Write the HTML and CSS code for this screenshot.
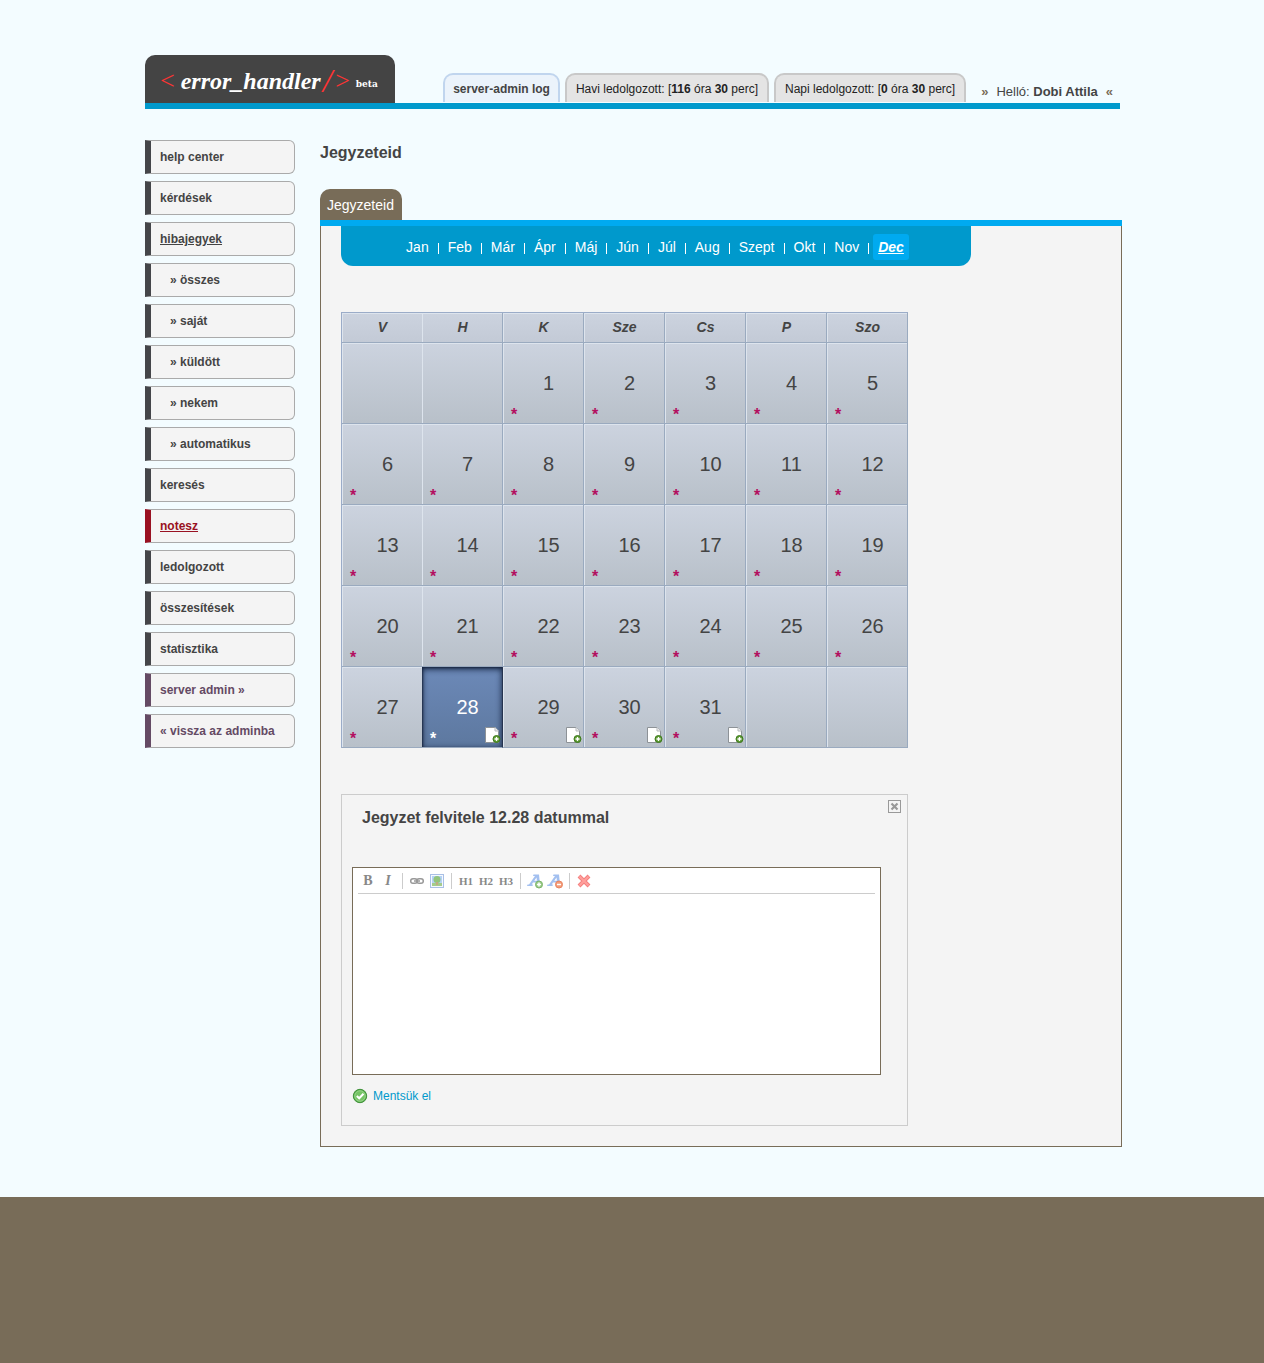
FILE: index.html
```html
<!DOCTYPE html>
<html lang="hu">
<head>
<meta charset="utf-8">
<title>error_handler</title>
<link rel="stylesheet" href="styles.css">
</head>
<body>
<svg class="sprite" aria-hidden="true">
  <symbol id="add-note" viewBox="0 0 16 16">
    <path d="M.5 .5H10L13.500 4V15.500H.5Z" fill="#fff" stroke="#8d9297"/>
    <path d="M10 .5V4H13.500" fill="#eee" stroke="#b5b9bd"/>
    <circle cx="11.500" cy="12" r="3.500" fill="#5f9b35" stroke="#3d7a1c"/>
    <path d="M11.500 10V14M9.500 12H13.500" stroke="#fff" stroke-width="1.300"/>
  </symbol>
  <symbol id="font-mark" viewBox="0 0 16 16">
    <path d="M0 13L.5 11.500H2L8 3H6L6.500 1.500H12L13 11.500H14V13H9L9.500 11.500H10.300L10 9.500H6L4.700 11.500H6L5.500 13ZM7.200 7.800H9.900L9.500 4.500Z" fill="#a3c0f0" fill-rule="evenodd"/>
  </symbol>
</svg>
<div class="page">
  <header class="header">
    <a class="logo" href="#"><span class="red">&lt;</span><span class="name">error_handler</span><span class="slash">/</span><span class="red">&gt;</span><span class="beta">beta</span></a>
    <div class="status">
      <a class="tab tab-log" href="#">server-admin log</a>
      <span class="tab">Havi ledolgozott: [<b>116</b> óra <b>30</b> perc]</span>
      <span class="tab">Napi ledolgozott: [<b>0</b> óra <b>30</b> perc]</span>
      <p class="hello"><b class="mark">»</b><span>Helló: <b>Dobi Attila</b></span><b class="mark">«</b></p>
    </div>
  </header>
  <div class="columns">
    <nav class="menu">
      <a href="#">help center</a>
      <a href="#">kérdések</a>
      <a class="open" href="#">hibajegyek</a>
      <a class="sub" href="#">» összes</a>
      <a class="sub" href="#">» saját</a>
      <a class="sub" href="#">» küldött</a>
      <a class="sub" href="#">» nekem</a>
      <a class="sub" href="#">» automatikus</a>
      <a href="#">keresés</a>
      <a class="current" href="#">notesz</a>
      <a href="#">ledolgozott</a>
      <a href="#">összesítések</a>
      <a href="#">statisztika</a>
      <a class="admin" href="#">server admin »</a>
      <a class="admin" href="#">« vissza az adminba</a>
    </nav>
    <main class="content">
      <h1>Jegyzeteid</h1>
      <a class="panel-tab" href="#">Jegyzeteid</a>
      <section class="panel">
        <ul class="months">
          <li><a href="#">Jan</a></li><li><a href="#">Feb</a></li><li><a href="#">Már</a></li><li><a href="#">Ápr</a></li><li><a href="#">Máj</a></li><li><a href="#">Jún</a></li><li><a href="#">Júl</a></li><li><a href="#">Aug</a></li><li><a href="#">Szept</a></li><li><a href="#">Okt</a></li><li><a href="#">Nov</a></li><li><a class="active" href="#">Dec</a></li>
        </ul>
        <table class="calendar">
          <thead><tr><th>V</th><th>H</th><th>K</th><th>Sze</th><th>Cs</th><th>P</th><th>Szo</th></tr></thead>
          <tbody>
            <tr><td></td><td></td><td><a href="#">1</a><div><i>*</i></div></td><td><a href="#">2</a><div><i>*</i></div></td><td><a href="#">3</a><div><i>*</i></div></td><td><a href="#">4</a><div><i>*</i></div></td><td><a href="#">5</a><div><i>*</i></div></td></tr>
            <tr><td><a href="#">6</a><div><i>*</i></div></td><td><a href="#">7</a><div><i>*</i></div></td><td><a href="#">8</a><div><i>*</i></div></td><td><a href="#">9</a><div><i>*</i></div></td><td><a href="#">10</a><div><i>*</i></div></td><td><a href="#">11</a><div><i>*</i></div></td><td><a href="#">12</a><div><i>*</i></div></td></tr>
            <tr><td><a href="#">13</a><div><i>*</i></div></td><td><a href="#">14</a><div><i>*</i></div></td><td><a href="#">15</a><div><i>*</i></div></td><td><a href="#">16</a><div><i>*</i></div></td><td><a href="#">17</a><div><i>*</i></div></td><td><a href="#">18</a><div><i>*</i></div></td><td><a href="#">19</a><div><i>*</i></div></td></tr>
            <tr><td><a href="#">20</a><div><i>*</i></div></td><td><a href="#">21</a><div><i>*</i></div></td><td><a href="#">22</a><div><i>*</i></div></td><td><a href="#">23</a><div><i>*</i></div></td><td><a href="#">24</a><div><i>*</i></div></td><td><a href="#">25</a><div><i>*</i></div></td><td><a href="#">26</a><div><i>*</i></div></td></tr>
            <tr><td><a href="#">27</a><div><i>*</i></div></td><td class="today"><a href="#">28</a><div><i>*</i><svg><use href="#add-note"/></svg></div></td><td><a href="#">29</a><div><i>*</i><svg><use href="#add-note"/></svg></div></td><td><a href="#">30</a><div><i>*</i><svg><use href="#add-note"/></svg></div></td><td><a href="#">31</a><div><i>*</i><svg><use href="#add-note"/></svg></div></td><td></td><td></td></tr>
          </tbody>
        </table>
        <form class="note">
          <div class="note-head">
            <h2><label for="note-text">Jegyzet felvitele 12.28 datummal</label></h2>
            <button type="button" class="close" aria-label="Bezárás"><svg width="13" height="13" viewBox="0 0 13 13"><rect x=".5" y=".5" width="12" height="12" fill="none" stroke="#999"/><path d="M3.500 3.500L9.500 9.500M9.500 3.500L3.500 9.500" stroke="#999" stroke-width="2.200"/></svg></button>
          </div>
          <div class="editor">
            <div class="toolbar">
              <button type="button" class="letter">B</button>
              <button type="button" class="letter italic">I</button>
              <span class="sep"></span>
              <button type="button" aria-label="Link"><svg width="16" height="16" viewBox="0 0 16 16" fill="none" stroke="#999" stroke-width="1.500"><rect x="1.700" y="5.700" width="6.500" height="4.600" rx="2.300"/><rect x="7.800" y="5.700" width="6.500" height="4.600" rx="2.300"/><path d="M5 8H11"/></svg></button>
              <button type="button" aria-label="Kép"><svg width="16" height="16" viewBox="0 0 16 16"><rect x="1.500" y="1.500" width="13" height="13" fill="#f5f9ff" stroke="#a9c0e6"/><rect x="3" y="3" width="10" height="10" fill="#b5d2f5"/><path d="M3 10H13V13H3Z" fill="#a5cc8b"/><circle cx="8" cy="6.500" r="3.500" fill="#92c57d"/><path d="M8 9V12" stroke="#c3a983" stroke-width="2"/></svg></button>
              <span class="sep"></span>
              <button type="button" class="letter small">H1</button>
              <button type="button" class="letter small">H2</button>
              <button type="button" class="letter small">H3</button>
              <span class="sep"></span>
              <button type="button" aria-label="Nagyobb betű"><svg width="16" height="16" viewBox="0 0 16 16"><use href="#font-mark"/><circle cx="12" cy="11.500" r="3.500" fill="#9bcb88" stroke="#7cb36a"/><path d="M12 9.500V13.500M10 11.500H14" stroke="#fff" stroke-width="1.500"/></svg></button>
              <button type="button" aria-label="Kisebb betű"><svg width="16" height="16" viewBox="0 0 16 16"><use href="#font-mark"/><circle cx="12" cy="11.500" r="3.500" fill="#f49b78" stroke="#e88460"/><path d="M10 11.500H14" stroke="#fff" stroke-width="1.500"/></svg></button>
              <span class="sep"></span>
              <button type="button" aria-label="Törlés"><svg width="16" height="16" viewBox="0 0 16 16"><path d="M3 3L13 13M13 3L3 13" stroke="#f47f7f" stroke-width="4"/><path d="M3.500 3.500L12.500 12.500M12.500 3.500L3.500 12.500" stroke="#ffa09c" stroke-width="2"/></svg></button>
            </div>
            <textarea id="note-text"></textarea>
          </div>
          <button type="button" class="save"><svg width="16" height="16" viewBox="0 0 16 16"><circle cx="8" cy="8" r="6.700" fill="#57ae4b" stroke="#3f9139"/><circle cx="8" cy="8" r="5.300" fill="#76c466" stroke="#a4dc98" stroke-width=".8"/><path d="M4.800 8L7.200 10.300L11.500 5.800" fill="none" stroke="#fff" stroke-width="2"/></svg>Mentsük el</button>
        </form>
      </section>
    </main>
  </div>
</div>
<footer class="footer"></footer>
</body>
</html>
```
FILE: styles.css
```css
* {
  box-sizing: border-box;
}

body {
  margin: 0;
  min-height: 100vh;
  display: flex;
  flex-direction: column;
  background: #f3fcff;
  color: #444;
  font: 12px/16px "Liberation Sans", Arial, sans-serif;
}

a {
  color: inherit;
  text-decoration: none;
}

button {
  padding: 0;
  border: 0;
  background: none;
  font: inherit;
  cursor: pointer;
}

svg {
  display: block;
}

.sprite {
  width: 0;
  height: 0;
  position: absolute;
}

.page {
  width: 100%;
  max-width: 976px;
  margin: 0 auto;
  padding: 55px 0 50px 1px;
}

/* Header */
.header {
  display: flex;
  justify-content: space-between;
  align-items: flex-end;
  border-bottom: 6px solid #09c;
}

.logo {
  display: flex;
  align-items: center;
  width: 250px;
  height: 48px;
  padding: 4px 0 0 15px;
  border-radius: 10px 10px 0 0;
  background: #444;
  color: #fff;
  font: bold 24px/32px "Liberation Serif", serif;
}

.name {
  margin: 0 2px 0 6px;
  font-style: italic;
}

.red,
.slash {
  color: #f33;
  font-weight: normal;
}

.red {
  font-size: 26px;
}

.slash {
  margin-right: 3px;
  font-size: 34px;
  font-style: italic;
}

.beta {
  margin: 6px 0 0 6px;
  font: bold 9px/12px "DejaVu Serif", serif;
}

.status {
  display: flex;
  gap: 5px;
  padding: 0 7px 1px 0;
}

.tab {
  height: 29px;
  padding: 6px 9px 0;
  border: 2px solid #c8c8c8;
  border-bottom: 0;
  border-radius: 10px 10px 0 0;
  background: #e4e4e4;
  color: #222;
}

.tab-log {
  padding: 6px 8px 0;
  border-color: #c0d5ee;
  background: #ebf3fb;
  color: #444;
  font-weight: bold;
}

.hello {
  display: flex;
  gap: 8px;
  margin: 11px 0 0 10px;
  font-size: 13px;
}

.mark {
  color: #786c58;
}

/* Columns and side menu */
.columns {
  display: flex;
  align-items: flex-start;
  gap: 25px;
  margin: 31px -2px 0 0;
}

.menu {
  flex: 0 0 150px;
  display: flex;
  flex-direction: column;
  gap: 7px;
  font-weight: bold;
}

.menu a {
  padding: 8px 9px;
  border: 1px solid #aaa;
  border-left: 6px solid #444549;
  border-radius: 0 6px 6px 0;
  background: #f4f4f4;
}

.menu .sub {
  padding-left: 19px;
}

.menu .open,
.menu .current {
  text-decoration: underline;
}

.menu .current {
  border-left-color: #991122;
  color: #991122;
}

.menu .admin {
  border-left-color: #644a64;
  color: #644a64;
}

/* Main panel */
.content {
  flex: 1;
  display: flex;
  flex-direction: column;
  align-items: flex-start;
}

h1,
h2 {
  margin: 0;
  font-size: 16px;
  line-height: 24px;
}

h1 {
  padding-top: 1px;
}

.panel-tab {
  margin-top: 24px;
  padding: 6px 8px 5px 7px;
  border-radius: 10px 10px 0 0;
  background: #786c58;
  color: #fff;
  font-size: 14px;
  line-height: 20px;
}

.panel {
  align-self: stretch;
  margin-top: 6px;
  padding: 0 20px 20px;
  border: 1px solid #786c58;
  border-top: 0;
  background: #f4f4f4;
  box-shadow: 0 -6px 0 #00aaf0;
}

.months {
  display: flex;
  justify-content: center;
  align-items: center;
  max-width: 630px;
  height: 40px;
  margin: 0;
  padding: 2px 2px 0 0;
  list-style: none;
  border-radius: 0 0 12px 12px;
  background: #09c;
  color: #fff;
  font-size: 14px;
}

.months li {
  display: flex;
  align-items: center;
}

.months li + li::before {
  content: "";
  width: 1px;
  height: 11px;
  margin: 2px 4px 0;
  background: #fff;
}

.months a {
  padding: 5px;
}

.months .active {
  border-radius: 3px;
  background: #00aaf0;
  font-weight: bold;
  font-style: italic;
  text-decoration: underline;
}

/* Calendar */
.calendar {
  table-layout: fixed;
  width: 567px;
  margin-top: 46px;
  border: 1px solid #9bacc8;
  border-width: 1px 0 0 1px;
  border-spacing: 0;
}

.calendar th,
.calendar td {
  padding: 0;
  border: 1px solid #9aaabf;
  border-width: 0 1px 1px 0;
  background: linear-gradient(#ccd3df, #b8c0c9);
  box-shadow: inset 1px 1px 0 #dde4ed;
}

.calendar tr > :first-child {
  width: 80px;
  border-right: 0;
}

.calendar th {
  height: 30px;
  padding: 0 0 2px 1px;
  background: linear-gradient(#ccd3df, #c3cad6);
  font-size: 14px;
  font-style: italic;
}

.calendar td {
  height: 81px;
  vertical-align: top;
}

.calendar td a {
  display: block;
  padding: 28px 0 8px 11px;
  font-size: 20px;
  line-height: 24px;
  text-align: center;
}

.calendar td div {
  display: flex;
  justify-content: space-between;
  height: 16px;
  padding: 0 1px 0 8px;
}

.calendar i {
  color: #b30f5f;
  font: bold 16px/24px "Liberation Sans", Arial, sans-serif;
}

.calendar svg {
  width: 16px;
  height: 16px;
}

.calendar .today {
  border-right-color: #26344f;
  background: linear-gradient(#6c89b8, #5d789f);
  box-shadow: inset 0 2px 6px #14233f, inset 1px 1px 2px #26344f;
  color: #fff;
}

.calendar .today i {
  color: #fff;
}

/* Note form */
.note {
  max-width: 567px;
  margin-top: 46px;
  padding: 5px 6px 20px 10px;
  border: 1px solid #ccc;
}

.note-head {
  display: flex;
  justify-content: space-between;
  align-items: flex-start;
}

h2 {
  padding: 6px 0 0 10px;
}

.editor {
  margin: 37px 20px 0 0;
  padding: 0 5px 5px;
  border: 1px solid #786c58;
  background: #fff;
}

.toolbar {
  display: flex;
  align-items: center;
  height: 26px;
  border-bottom: 1px solid #ccc;
}

.toolbar button {
  display: flex;
  justify-content: center;
  width: 20px;
}

.sep {
  width: 1px;
  height: 16px;
  margin: 0 4px;
  background: #ccc;
}

.toolbar .letter {
  color: #888;
  font: bold 14px/16px "Liberation Serif", serif;
}

.toolbar .italic {
  font-style: italic;
}

.toolbar .small {
  font-size: 11px;
}

.editor textarea {
  display: block;
  width: 100%;
  height: 175px;
  padding: 4px;
  border: 0;
  outline: 0;
  resize: none;
  background: none;
  font: inherit;
}

.save {
  display: flex;
  align-items: center;
  gap: 5px;
  margin: 13px 0 1px;
  color: #09c;
}

/* Footer */
.footer {
  flex: 1;
  min-height: 120px;
  background: #786c58;
}
```
